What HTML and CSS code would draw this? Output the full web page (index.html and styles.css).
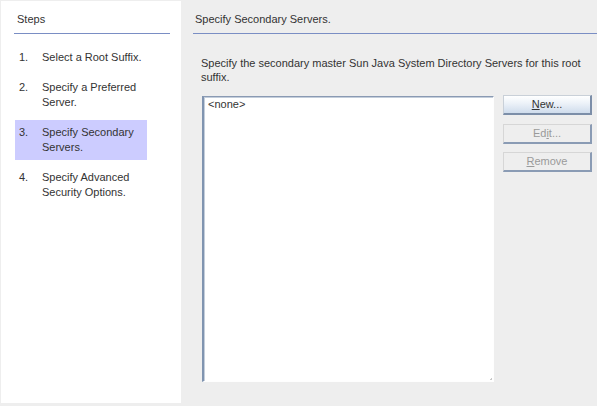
FILE: index.html
```html
<!DOCTYPE html>
<html>
<head>
<meta charset="utf-8">
<link rel="stylesheet" href="styles.css">
</head>
<body>
<div class="window">
  <aside class="steps">
    <div class="steps-title">Steps</div>
    <ol class="step-list">
      <li class="step"><span class="num">1.</span><span class="label">Select a Root Suffix.</span></li>
      <li class="step"><span class="num">2.</span><span class="label">Specify a Preferred Server.</span></li>
      <li class="step current"><span class="num">3.</span><span class="label">Specify Secondary Servers.</span></li>
      <li class="step"><span class="num">4.</span><span class="label">Specify Advanced Security Options.</span></li>
    </ol>
  </aside>
  <main class="content">
    <div class="content-title">Specify Secondary Servers.</div>
    <p class="desc">Specify the secondary master Sun Java System Directory Servers for this root suffix.</p>
    <div class="editor">
      <div class="listbox">
        <div class="list-item">&lt;none&gt;</div>
        <span class="grip"></span>
      </div>
      <div class="buttons">
        <button class="btn"><u>N</u>ew...</button>
        <button class="btn disabled" disabled>Ed<u>i</u>t...</button>
        <button class="btn disabled" disabled><u>R</u>emove</button>
      </div>
    </div>
  </main>
</div>
</body>
</html>
```
FILE: styles.css
```css
* { box-sizing: border-box; }
html, body {
  margin: 0;
  padding: 0;
  background: #eeeeee;
}
body {
  font-family: "Liberation Sans", Arial, sans-serif;
  font-size: 11px;
  color: #333333;
}
.window {
  display: flex;
  width: 597px;
  height: 406px;
  padding: 1px 0 0 1px;
}
.steps {
  width: 180px;
  height: 402px;
  background: #ffffff;
  padding: 0 11px 0 13px;
}
.steps-title {
  padding: 11px 0 6px 3px;
  line-height: 15px;
  border-bottom: 1px solid #7a8ec4;
}
.step-list {
  list-style: none;
  margin: 11px 0 0 0;
  padding: 0 0 0 1px;
}
.step {
  display: flex;
  width: 132px;
  padding: 5px 0 5px 4px;
  margin-bottom: 5px;
  line-height: 15px;
}
.step.current {
  background: #ccccff;
}
.num {
  width: 23px;
  flex: none;
}
.label {
  flex: 1;
}
.content {
  flex: 1;
  padding: 0 0 0 12px;
  display: flex;
  flex-direction: column;
}
.content-title {
  padding: 11px 0 6px 2px;
  line-height: 15px;
  border-bottom: 1px solid #7a8ec4;
}
.desc {
  margin: 22px 5px 0 8px;
  line-height: 14px;
}
.editor {
  display: flex;
  align-items: flex-start;
  margin: 12px 5px 0 9px;
}
.listbox {
  position: relative;
  width: 292px;
  height: 286px;
  background: #ffffff;
  border-style: solid;
  border-width: 1px 1px 1px 2px;
  border-color: #8a9ab3 #fefefe #fefefe #8094b0;
  box-shadow: inset 1px 1px 0 #c4cedb;
}
.list-item {
  padding: 1px 0 0 4px;
  line-height: 12px;
}
.grip {
  position: absolute;
  right: 1px;
  bottom: 1px;
  width: 3px;
  height: 3px;
  background: linear-gradient(135deg, transparent 50%, #c8c8c8 50%);
}
.buttons {
  display: flex;
  flex-direction: column;
  gap: 8.5px;
  margin: -1px 0 0 9px;
}
.btn {
  width: 89px;
  height: 20px;
  padding: 0;
  font-family: "Liberation Sans", Arial, sans-serif;
  font-size: 11px;
  color: #333333;
  line-height: 17px;
  text-align: center;
  border-style: solid;
  border-width: 1px 2px 2px 1px;
  border-color: #c9d0d8 #7c8ea8 #7c8ea8 #c9d0d8;
  background: linear-gradient(to bottom, #ffffff 0%, #eef3f9 40%, #cfdcec 100%);
}
.btn u {
  text-decoration: underline;
  text-underline-offset: 1px;
}
.btn.disabled {
  color: #9a9a9a;
  background: #eeeeee;
  border-color: #d6d6d6 #8a9bb4 #8a9bb4 #d6d6d6;
}
```
